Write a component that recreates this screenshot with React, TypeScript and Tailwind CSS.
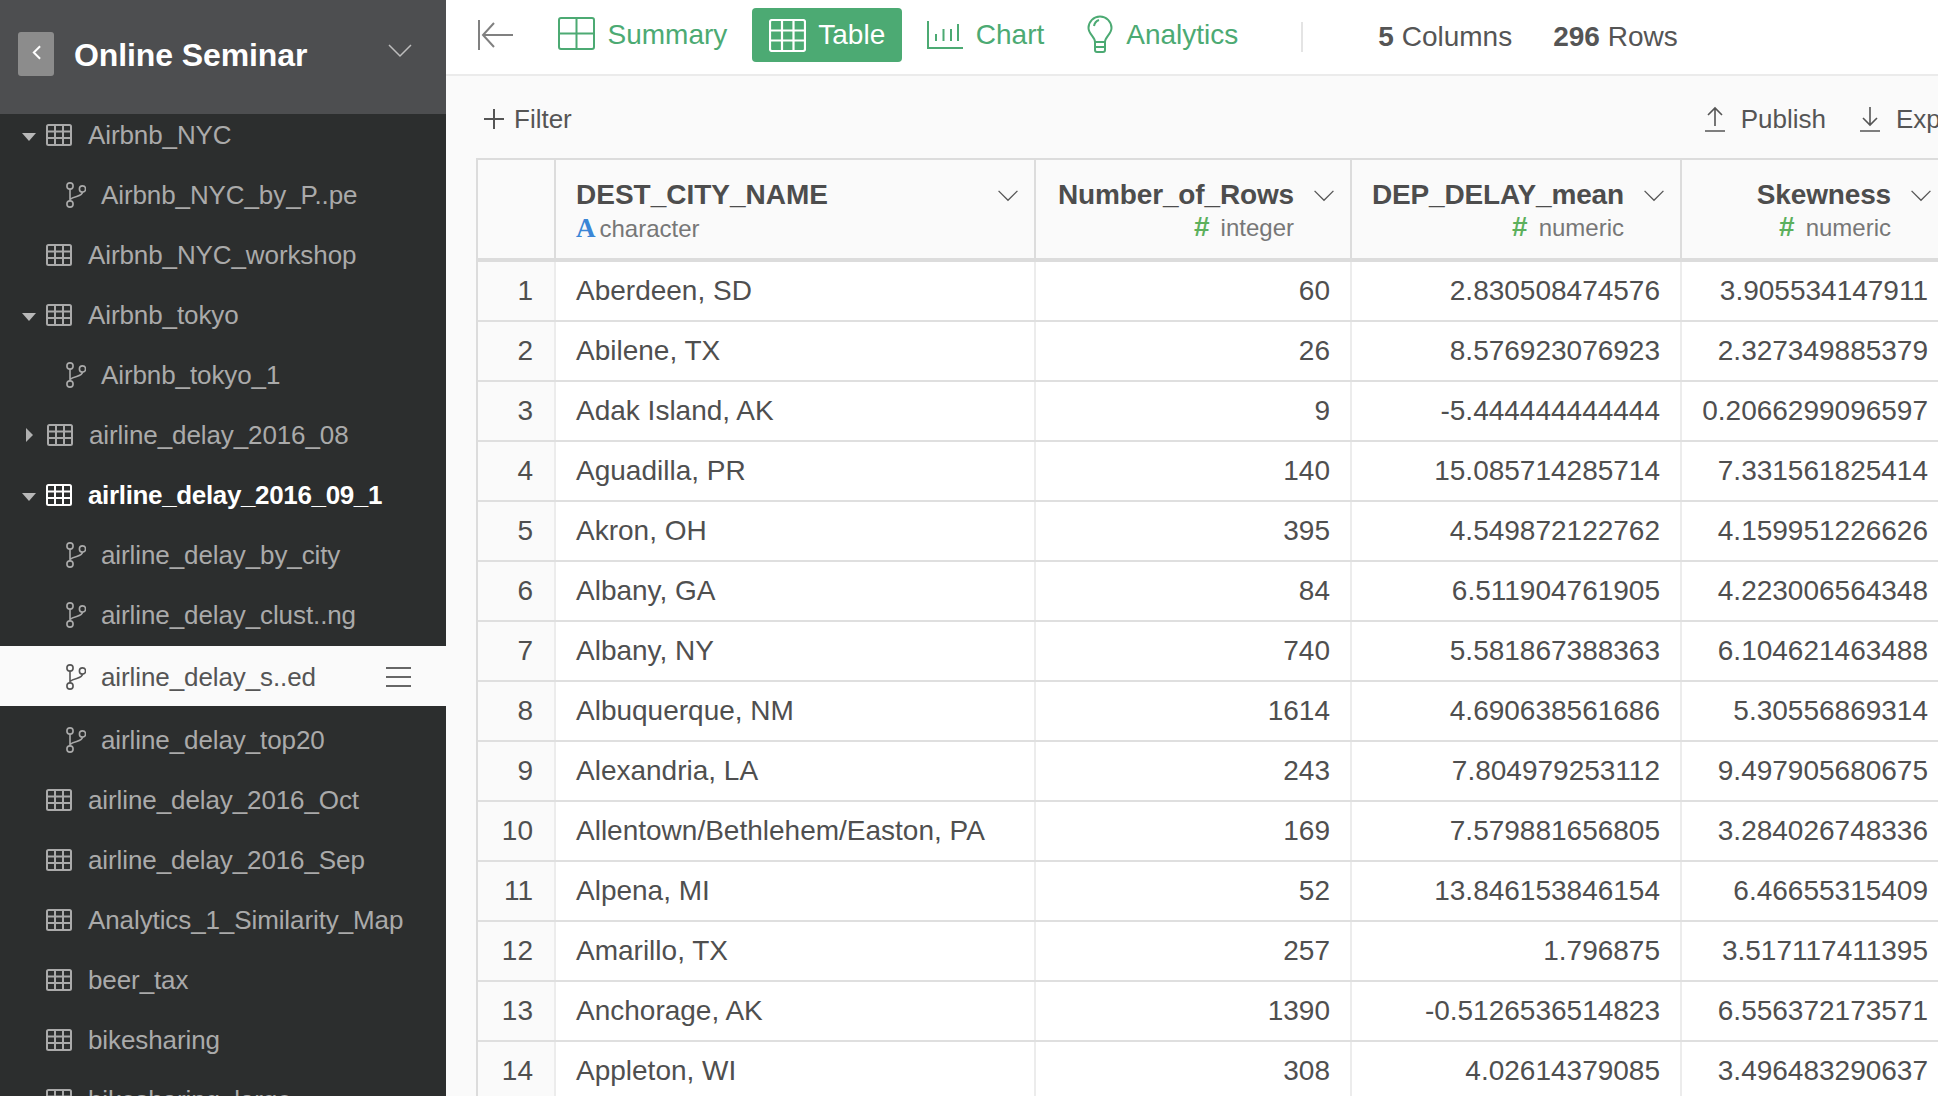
type SideItem = {
  name: string;
  kind: "table" | "branch";
  caret?: "down" | "right";
  current?: boolean;
  active?: boolean;
};

const sideItems: SideItem[] = [
  { name: "Airbnb_NYC", kind: "table", caret: "down" },
  { name: "Airbnb_NYC_by_P..pe", kind: "branch" },
  { name: "Airbnb_NYC_workshop", kind: "table" },
  { name: "Airbnb_tokyo", kind: "table", caret: "down" },
  { name: "Airbnb_tokyo_1", kind: "branch" },
  { name: "airline_delay_2016_08", kind: "table", caret: "right" },
  { name: "airline_delay_2016_09_1", kind: "table", caret: "down", current: true },
  { name: "airline_delay_by_city", kind: "branch" },
  { name: "airline_delay_clust..ng", kind: "branch" },
  { name: "airline_delay_s..ed", kind: "branch", active: true },
  { name: "airline_delay_top20", kind: "branch" },
  { name: "airline_delay_2016_Oct", kind: "table" },
  { name: "airline_delay_2016_Sep", kind: "table" },
  { name: "Analytics_1_Similarity_Map", kind: "table" },
  { name: "beer_tax", kind: "table" },
  { name: "bikesharing", kind: "table" },
  { name: "bikesharing_large", kind: "table" },
];

const rows: [string, string, string, string][] = [
  ["Aberdeen, SD", "60", "2.830508474576", "3.905534147911"],
  ["Abilene, TX", "26", "8.576923076923", "2.327349885379"],
  ["Adak Island, AK", "9", "-5.444444444444", "0.2066299096597"],
  ["Aguadilla, PR", "140", "15.085714285714", "7.331561825414"],
  ["Akron, OH", "395", "4.549872122762", "4.159951226626"],
  ["Albany, GA", "84", "6.511904761905", "4.223006564348"],
  ["Albany, NY", "740", "5.581867388363", "6.104621463488"],
  ["Albuquerque, NM", "1614", "4.690638561686", "5.30556869314"],
  ["Alexandria, LA", "243", "7.804979253112", "9.497905680675"],
  ["Allentown/Bethlehem/Easton, PA", "169", "7.579881656805", "3.284026748336"],
  ["Alpena, MI", "52", "13.846153846154", "6.46655315409"],
  ["Amarillo, TX", "257", "1.796875", "3.517117411395"],
  ["Anchorage, AK", "1390", "-0.5126536514823", "6.556372173571"],
  ["Appleton, WI", "308", "4.02614379085", "3.496483290637"],
];

const gridCols = "grid grid-cols-[78px_480px_316px_330px_267px]";

function Chevron({ className }: { className: string }) {
  return (
    <svg viewBox="0 0 24 14" fill="none" stroke="currentColor" strokeWidth="1.5" className={className}>
      <path d="M1 1l11 11L23 1" />
    </svg>
  );
}

function GridIcon({ className }: { className: string }) {
  return (
    <svg viewBox="0 0 26 22" fill="none" stroke="currentColor" strokeWidth="2" className={className}>
      <rect x="1" y="1" width="24" height="20" rx="1.5" />
      <path d="M1 7.500h24M1 14h24M9 1v20M17 1v20" />
    </svg>
  );
}

function BranchIcon({ className }: { className: string }) {
  return (
    <svg viewBox="0 0 20 26" fill="none" stroke="currentColor" strokeWidth="1.6" className={className}>
      <circle cx="4" cy="4" r="3.100" />
      <circle cx="4" cy="22" r="3.100" />
      <circle cx="16.500" cy="7" r="3.100" />
      <path d="M4 7.100v11.800M16.500 10.100c0 5-8.500 3.400-12.500 7.400" />
    </svg>
  );
}

function SideRow({ item }: { item: SideItem }) {
  const tone = item.active
    ? "bg-[#fafafa] text-[#555555] mt-[1px] mb-[4px] pt-[2px]"
    : item.current
      ? "text-white font-bold tracking-[-0.35px]"
      : "text-[#aaaaaa]";
  return (
    <div className={`flex h-[60px] items-center pl-[22px] pr-[35px] ${tone}`}>
      {item.kind === "branch" ? (
        <>
          <BranchIcon className="ml-[44px] h-[26px] w-[20px] shrink-0" />
          <span className="ml-[15px]">{item.name}</span>
        </>
      ) : (
        <>
          {item.caret === "down" && (
            <span className="mt-[3px] h-0 w-0 border-x-[7.5px] border-t-[8px] border-x-transparent border-t-[#b8b8b8]" />
          )}
          {item.caret === "right" && (
            <span className="ml-[4px] mr-[4px] h-0 w-0 border-y-[7.5px] border-l-[7px] border-y-transparent border-l-[#b0b0b0]" />
          )}
          <GridIcon className={`h-[22px] w-[26px] shrink-0 ${item.caret ? "ml-[10px]" : "ml-[24px]"}`} />
          <span className="ml-[16px]">{item.name}</span>
        </>
      )}
      {item.active && (
        <div className="ml-auto flex w-[25px] flex-col gap-[7px]">
          <span className="h-[2px] bg-[#666666]" />
          <span className="h-[2px] bg-[#666666]" />
          <span className="h-[2px] bg-[#666666]" />
        </div>
      )}
    </div>
  );
}

function Sidebar() {
  return (
    <aside className="flex h-full w-[446px] shrink-0 flex-col bg-[#2c2e2e] text-[26px] tracking-[-0.1px]">
      <div className="flex h-[114px] shrink-0 items-start bg-[#4d4e50] pl-[18px] pr-[34px] pt-[32px]">
        <button className="flex h-[44px] w-[36px] items-center justify-center rounded-[3px] bg-[#8c8c8c]">
          <svg viewBox="0 0 10 16" fill="none" stroke="white" strokeWidth="2.200" className="mb-[4px] h-[15px] w-[9px]">
            <path d="M9 1L2 8l7 7" />
          </svg>
        </button>
        <h1 className="ml-[20px] text-[32px] font-bold leading-[46px] text-white">Online Seminar</h1>
        <Chevron className="ml-auto mt-[12px] h-[14px] w-[24px] text-[#bdbdbd]" />
      </div>
      <div className="min-h-0 flex-1 overflow-hidden">
        <div className="-mt-[9px]">
          {sideItems.map((item) => (
            <SideRow key={item.name} item={item} />
          ))}
        </div>
      </div>
    </aside>
  );
}

function TopBar() {
  const green = "text-[#4caa73]";
  return (
    <div className="flex h-[76px] shrink-0 items-center border-b-2 border-[#ebebeb] bg-white text-[28px]">
      <div className="mb-[4px] flex items-center">
        <svg viewBox="0 0 35 30" fill="none" stroke="#808080" strokeWidth="2" className="ml-[32px] h-[30px] w-[35px]">
          <path d="M1 0v30M35 15H5M16 3L5 15l11 12" />
        </svg>
        <div className={`ml-[45px] flex items-center ${green}`}>
          <svg viewBox="0 0 37 33" fill="none" stroke="currentColor" strokeWidth="2" className="mb-[3px] h-[33px] w-[37px]">
            <rect x="1" y="1" width="35" height="31" rx="2" />
            <path d="M18.500 1v31M1 16.500h35" />
          </svg>
          <span className="ml-[12.5px]">Summary</span>
        </div>
        <div className="ml-[25px] flex h-[54px] w-[150px] items-center rounded-[4px] bg-[#4caa73] pl-[17px] text-white">
          <svg viewBox="0 0 37 33" fill="none" stroke="currentColor" strokeWidth="2.200" className="h-[33px] w-[37px]">
            <rect x="1" y="1" width="35" height="31" rx="2" />
            <path d="M1 11.500h35M1 21.500h35M13 1v31M24.500 1v31" />
          </svg>
          <span className="ml-[12px]">Table</span>
        </div>
        <div className={`ml-[25px] flex items-center ${green}`}>
          <svg viewBox="0 0 36 28" fill="none" stroke="currentColor" strokeWidth="2" className="h-[28px] w-[36px]">
            <path d="M1 0v27h35M9 13v7M16.500 8v12M24 8v12M31 3v17" />
          </svg>
          <span className="ml-[12.5px]">Chart</span>
        </div>
        <div className={`ml-[43px] flex items-center ${green}`}>
          <svg viewBox="0 0 26 38" fill="none" stroke="currentColor" strokeWidth="2" className="mb-[2px] h-[38px] w-[26px]">
            <path d="M8 27c0-5-6.500-8-6.500-14a11.500 11.500 0 0 1 23 0c0 6-6.500 9-6.500 14z" />
            <path d="M8 27v8a2 2 0 0 0 2 2h6a2 2 0 0 0 2-2v-8M8 32h10M7 11c.5-3 2-5 5-6" />
          </svg>
          <span className="ml-[13px]">Analytics</span>
        </div>
      </div>
      <div className="ml-[63px] h-[30px] w-[2px] bg-[#e4e4e4]" />
      <div className="ml-[75px] text-[#555555]">
        <b>5</b> Columns
      </div>
      <div className="ml-[41px] text-[#555555]">
        <b>296</b> Rows
      </div>
    </div>
  );
}

function ActionRow() {
  return (
    <div className="flex h-[82px] shrink-0 items-center pl-[38px] pt-[4px] text-[26px] text-[#555555]">
      <svg viewBox="0 0 20 20" fill="none" stroke="currentColor" strokeWidth="2" className="h-[20px] w-[20px]">
        <path d="M10 0v20M0 10h20" />
      </svg>
      <span className="ml-[10px]">Filter</span>
      <svg viewBox="0 0 20 26" fill="none" stroke="currentColor" strokeWidth="1.600" className="ml-auto h-[26px] w-[20px]">
        <path d="M10 20V2M3 9l7-7 7 7M0 25h20" />
      </svg>
      <span className="ml-[16px]">Publish</span>
      <svg viewBox="0 0 20 26" fill="none" stroke="currentColor" strokeWidth="1.600" className="ml-[34px] h-[26px] w-[20px]">
        <path d="M10 1v18M3 12l7 7 7-7M0 25h20" />
      </svg>
      <span className="ml-[16px] w-[42px] overflow-hidden">Export</span>
    </div>
  );
}

function HeaderCell({ name, type, first }: { name: string; type: string; first?: boolean }) {
  return (
    <div
      className={`flex h-[98px] items-start border-r-2 border-[#dcdcdc] pr-[15px] pt-[17px] ${first ? "justify-between pl-[20px]" : "justify-end"}`}
    >
      <div className={first ? "" : "text-right"}>
        <div className={`text-[28px] font-bold leading-[36px] text-[#4d4d4d] ${first ? "" : "tracking-[-0.15px]"}`}>{name}</div>
        <div className="-mt-[1px] text-[24px] leading-[32px] text-[#777777]">
          {first ? (
            <span className="mr-[4px] font-['Liberation_Serif',serif] text-[27px] font-bold text-[#3b86d6]">A</span>
          ) : (
            <span className="mr-[11px] text-[28px] font-bold leading-[28px] text-[#5cb05c]">#</span>
          )}
          {type}
        </div>
      </div>
      <Chevron className={`mt-[13px] h-[12px] w-[22px] text-[#555555] ${first ? "" : "ml-[19px]"}`} />
    </div>
  );
}

function DataTable() {
  return (
    <div className="min-h-0 flex-1 overflow-hidden pl-[30px]">
      <div className="w-[1473px] border-l-2 border-t-2 border-[#dcdcdc]">
        <div className={`${gridCols} border-b-4 border-[#dcdcdc] bg-[#fafafa]`}>
          <div className="border-r-2 border-[#dcdcdc]" />
          <HeaderCell first name="DEST_CITY_NAME" type="character" />
          <HeaderCell name="Number_of_Rows" type="integer" />
          <HeaderCell name="DEP_DELAY_mean" type="numeric" />
          <HeaderCell name="Skewness" type="numeric" />
        </div>
        {rows.map((row, i) => (
          <div key={row[0]} className={`${gridCols} h-[60px] border-b-2 border-[#dfdfdf] bg-white text-[28px] leading-[58px] text-[#4f4f4f]`}>
            <div className="border-r-2 border-[#ececec] bg-[#fafafa] pr-[21px] text-right">{i + 1}</div>
            <div className="border-r-2 border-[#ececec] pl-[20px]">{row[0]}</div>
            <div className="border-r-2 border-[#ececec] pr-[20px] text-right">{row[1]}</div>
            <div className="border-r-2 border-[#ececec] pr-[20px] text-right">{row[2]}</div>
            <div className="pr-[21px] text-right">{row[3]}</div>
          </div>
        ))}
      </div>
    </div>
  );
}

export default function App() {
  return (
    <div className="flex h-[1096px] w-[1938px] overflow-hidden bg-[#fafafa] font-['Liberation_Sans',Arial,sans-serif]">
      <Sidebar />
      <main className="flex min-w-0 flex-1 flex-col">
        <TopBar />
        <ActionRow />
        <DataTable />
      </main>
    </div>
  );
}
